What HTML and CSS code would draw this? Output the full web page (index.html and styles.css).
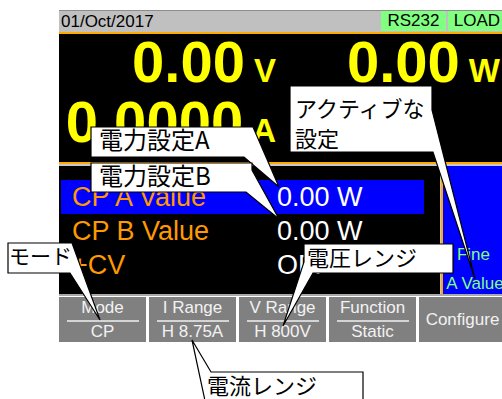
FILE: index.html
```html
<!DOCTYPE html>
<html lang="ja">
<head>
    <meta charset="UTF-8">
    <title>CP mode screen</title>
    <link rel="stylesheet" href="styles.css">
</head>
<body>
<div class="screen">
    <div class="status">
        <span class="date">01/Oct/2017</span>
        <span class="badge rs">RS232</span>
        <span class="badge load">LOAD</span>
    </div>
    <div class="readings">
        <div class="reading">0.00<span class="unit">V</span></div>
        <div class="reading">0.00<span class="unit">W</span></div>
        <div class="reading">0.0000<span class="unit">A</span></div>
    </div>
    <div class="main">
        <div class="settings">
            <div class="row active"><span class="label">CP A Value</span><span class="value">0.00 W</span></div>
            <div class="row"><span class="label">CP B Value</span><span class="value">0.00 W</span></div>
            <div class="row"><span class="label">+CV</span><span class="value">OFF</span></div>
        </div>
        <div class="side">
            <div>Fine</div>
            <div>A Value</div>
        </div>
    </div>
    <div class="keys">
        <div class="key"><div class="key-top">Mode</div><div class="key-rule"></div><div class="key-bottom">CP</div></div>
        <div class="key"><div class="key-top">I Range</div><div class="key-rule"></div><div class="key-bottom">H 8.75A</div></div>
        <div class="key"><div class="key-top">V Range</div><div class="key-rule"></div><div class="key-bottom">H 800V</div></div>
        <div class="key"><div class="key-top">Function</div><div class="key-rule"></div><div class="key-bottom">Static</div></div>
        <div class="key single">Configure</div>
    </div>
</div>

<svg class="callouts" width="502" height="399" viewBox="0 0 502 399">
    <polygon points="290,86 432,86 432,110 475,279 433,152 290,152"/>
    <polygon points="91,127 253,127 279,187 244,157 91,157"/>
    <polygon points="91,163 252,163 252,170 279,219 246,192 91,192"/>
    <polygon points="8,243 72,243 100,320 70,273 8,273"/>
    <polygon points="304,244 453,244 453,273 313,273 283,326 304,262"/>
    <polygon points="192,340 211,372 363,372 363,410 207,410"/>
</svg>
<div class="note note-active">アクティブな<br>設定</div>
<div class="note note-pa">電力設定A</div>
<div class="note note-pb">電力設定B</div>
<div class="note note-mode">モード</div>
<div class="note note-volt">電圧レンジ</div>
<div class="note note-curr">電流レンジ</div>
</body>
</html>
```

FILE: styles.css
```css
*{
    margin:0;
    padding:0;
    box-sizing:border-box;
}
body{
    position:relative;
    width:502px;
    height:399px;
    overflow:hidden;
    background:#fff;
    font-family:"Liberation Sans", Arial, sans-serif;
}
.screen{
    width:448px;
    margin:10px 0 0 59px;
}

/* top status bar */
.status{
    display:flex;
    align-items:flex-start;
    gap:2px;
    height:24px;
    padding-right:1px;
    background:#c0c0c0;
    border-top:1px solid #8c8c8c;
    border-bottom:2px solid #ffaa00;
    font-size:17px;
    color:#000;
}
.date{
    flex:1;
    line-height:22px;
    padding-left:2px;
}
.badge{
    height:20px;
    line-height:20px;
    text-align:center;
    background:#80ff80;
}
.rs{
    width:65px;
}
.load{
    width:58px;
}

/* big measurement readout */
.readings{
    display:grid;
    grid-template-columns:217px 224px;
    grid-template-rows:60px 60px;
    height:130px;
    background:#000;
    border-bottom:2px solid #ffaa00;
    color:#ffff00;
    font-weight:bold;
    font-size:58px;
    line-height:56px;
    text-align:right;
}
.unit{
    font-size:33px;
    margin-left:9px;
}

/* settings list + side panel */
.main{
    display:flex;
    height:132px;
    background:#000;
    border-top:2px solid #c8c8c8;
    border-bottom:2px solid #a8a8a8;
}
.settings{
    width:382px;
    padding:14px 0 0 2px;
    border-right:1px solid #c8c8c8;
}
.row{
    display:grid;
    grid-template-columns:216px auto;
    width:363px;
    height:34px;
    line-height:34px;
    font-size:27px;
    white-space:nowrap;
}
.row.active{
    background:#0000ff;
}
.label{
    padding-left:11px;
    color:#ff9900;
}
.value{
    color:#fff;
}
.side{
    flex:1;
    padding-top:74px;
    background:#0000ff;
    border-left:2px solid #ffaa00;
    color:#80ff80;
    font-size:17px;
    line-height:29px;
    text-align:center;
    white-space:nowrap;
    overflow:hidden;
}
.side div:first-child{
    padding-right:3px;
}

/* soft keys */
.keys{
    display:flex;
    gap:3px;
    margin-top:1px;
}
.key{
    width:87px;
    height:45px;
    padding-top:1px;
    background:#808080;
    color:#f2f2f2;
    font-size:17px;
    text-align:center;
    white-space:nowrap;
}
.key-top,
.key-bottom{
    line-height:20px;
}
.key-rule{
    width:72px;
    height:2px;
    margin:2px auto 0;
    background:#d4d4d4;
}
.key.single{
    padding-top:0;
    line-height:45px;
}

/* callouts laid over the screen */
.callouts{
    position:absolute;
    left:0;
    top:0;
}
.callouts polygon{
    fill:#fff;
    stroke:#000;
    stroke-width:1.2;
}
.note{
    position:absolute;
    font-family:"Noto Sans CJK JP", sans-serif;
    font-size:22px;
    line-height:30px;
    color:#000;
    white-space:nowrap;
}
.note-active{
    left:295px;
    top:92px;
}
.note-pa{
    left:99px;
    top:124px;
    font-size:24px;
}
.note-pb{
    left:99px;
    top:160px;
    font-size:24px;
}
.note-mode{
    left:9px;
    top:240px;
    font-size:21px;
}
.note-volt{
    left:307px;
    top:241px;
}
.note-curr{
    left:207px;
    top:369px;
}
```
